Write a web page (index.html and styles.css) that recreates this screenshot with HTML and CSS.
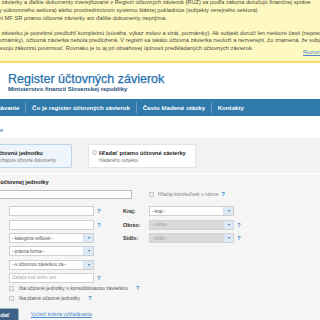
FILE: index.html
```html
<!DOCTYPE html>
<html lang="sk">
  <head>
    <meta charset="UTF-8" />
    <meta name="viewport" content="width=device-width, initial-scale=1.0" />
    <title>Register účtovných závierok</title>
    <link rel="stylesheet" href="styles.css">
  </head>
  <body>
    <div class="page">
      <div class="notice">
        <p>
          Účtovné závierky a ďalšie dokumenty zverejňované v Registri účtovných závierok (RÚZ) sa podľa zákona doručujú finančnej správe<br />
          (subjekty súkromného sektora) alebo prostredníctvom systému štátnej pokladnice (subjekty verejného sektora).<br />
          Portál ani MF SR priamo účtovné závierky ani ďalšie dokumenty neprijíma.
        </p>
        <div class="notice-last">
          <p>
            Účtovnú závierku je potrebné predložiť kompletnú (súvaha, výkaz ziskov a strát, poznámky). Ak subjekt doručí len niektoré časti (nepredloží<br />
            (napr. poznámky), účtovná závierka nebola predložená. V registri sa takáto účtovná závierka neuloží a nezverejní, čo znamená, že subjekt<br />
            nesplnil svoju zákonnú povinnosť. Rovnako je to aj pri obsahovej úplnosti predkladaných účtovných závierok.
          </p>
          <a href="#" class="dismiss">Rozumiem</a>
        </div>
      </div>

      <header class="masthead">
        <h1>Register účtovných závierok</h1>
        <p>Ministerstvo financií Slovenskej republiky</p>
      </header>

      <nav class="mainnav">
        <ul>
          <li><a href="#">Vyhľadávanie</a></li>
          <li><a href="#">Čo je register účtovných závierok</a></li>
          <li><a href="#">Často kladené otázky</a></li>
          <li><a href="#">Kontakty</a></li>
        </ul>
      </nav>

      <div class="crumbs"><a href="#">Vyhľadávanie</a></div>

      <form class="search" id="searchForm">
        <div class="modes">
          <label class="mode mode-active">
            <input type="radio" name="mode" checked />
            <span>
              <b>Hľadať účtovnú jednotku</b>
              <small>a k nej prislúchajúce účtovné dokumenty</small>
            </span>
          </label>
          <label class="mode">
            <input type="radio" name="mode" />
            <span>
              <b>Hľadať priamo účtovné závierky</b>
              <small>hľadaného subjektu</small>
            </span>
          </label>
        </div>

        <div class="fields">
          <label class="field-title" for="name">Názov účtovnej jednotky</label>
          <div class="name-row">
            <input type="text" id="name" class="wide" />
            <label class="check"><input type="checkbox" /> Hľadaj ktorékoľvek v názve</label>
            <span class="help">?</span>
          </div>

          <div class="cols">
            <div class="col-left">
              <div class="row"><input type="text" /><span class="help">?</span></div>
              <div class="row"><input type="text" /><span class="help">?</span></div>
              <div class="row">
                <div class="select"><select><option>--kategória veľkosti--</option></select><span class="arrow"></span></div>
              </div>
              <div class="row">
                <div class="select"><select><option>--právna forma--</option></select><span class="arrow"></span></div>
              </div>
              <div class="row">
                <div class="select"><select><option>--s účtovnou závierkou za--</option></select><span class="arrow"></span></div>
              </div>
              <div class="row"><input type="text" placeholder="Zadajte kód alebo text" /><span class="help">?</span></div>
            </div>
            <div class="col-right">
              <div class="row">
                <span class="lbl">Kraj:</span>
                <div class="select"><select><option>--kraj--</option></select><span class="arrow"></span></div>
              </div>
              <div class="row">
                <span class="lbl">Okres:</span>
                <div class="select disabled"><select disabled><option>--okres--</option></select><span class="arrow"></span></div>
                <span class="help">?</span>
              </div>
              <div class="row">
                <span class="lbl">Sídlo:</span>
                <div class="select disabled"><select disabled><option>--sídlo--</option></select><span class="arrow"></span></div>
                <span class="help">?</span>
              </div>
            </div>
          </div>

          <div class="checks">
            <label class="check"><input type="checkbox" /> Iba účtovné jednotky s konsolidovanou závierkou <span class="help">?</span></label>
            <label class="check"><input type="checkbox" /> Iba platné účtovné jednotky <span class="help">?</span></label>
          </div>

          <div class="actions">
            <button type="button" class="btn">Hľadať</button>
            <a href="#" class="reset">Vyčistiť kritériá vyhľadávania</a>
          </div>
        </div>
      </form>
    </div>
  </body>
</html>
```

FILE: styles.css
```css
html,
body {
  margin: 0;
  padding: 0;
  overflow: hidden;
  background-color: #f5f5f5;
}
body {
  font-family: "Liberation Sans", Arial, sans-serif;
  color: #333;
}
a {
  text-decoration: none;
}
.page {
  width: 400px;
  margin-left: -60px;
  background-color: #ffffff;
}

/* notice */
.notice {
  background-color: #fef9c1;
  border-bottom: 2px solid #f8de6c;
  padding: 0 15px 7.5px 39px;
  font-size: 5.7px;
  line-height: 7.8px;
  color: #4a4a40;
  white-space: nowrap;
}
.notice p {
  margin: -0.6px 0 0 0;
}
.notice-last {
  display: grid;
  margin-top: 6.9px;
}
.notice-last p {
  grid-area: 1 / 1;
  margin: 0;
}
.dismiss {
  grid-area: 1 / 1;
  justify-self: end;
  align-self: end;
  margin-bottom: -4px;
  color: #4a8ccc;
  text-decoration: underline;
}

/* header */
.masthead {
  padding: 9px 0 6.2px 68px;
}
.masthead h1 {
  margin: 0;
  font-size: 12.5px;
  line-height: 14px;
  font-weight: normal;
  color: #2670ae;
  -webkit-text-stroke: 0.25px #2670ae;
}
.masthead p {
  margin: 0;
  font-size: 6px;
  line-height: 7px;
  font-weight: bold;
  color: #1d4f7c;
}

/* nav */
.mainnav {
  background-color: #2f7aaa;
  height: 17px;
  padding-left: 34px;
}
.mainnav ul {
  list-style: none;
  margin: 0;
  padding: 0;
  height: 17px;
  display: flex;
  align-items: center;
  white-space: nowrap;
}
.mainnav li {
  display: flex;
  align-items: center;
  height: 11px;
  padding: 0 5.8px;
}
.mainnav li + li {
  border-left: 1px solid #6b9ec4;
}
.mainnav a {
  color: #ffffff;
  font-size: 6.15px;
  font-weight: bold;
}

.crumbs {
  padding: 11px 0 4px 27px;
  font-size: 6px;
  line-height: 7px;
}
.crumbs a {
  color: #2e7bbf;
}

/* search form */
.search {
  background-color: #f5f5f5;
}
.modes {
  display: flex;
  gap: 16px;
  padding: 6px 0 5px 24px;
  background-color: #f2f2f2;
  border-bottom: 1px solid #ffffff;
}
.mode {
  width: 108px;
  height: 24px;
  box-sizing: border-box;
  display: flex;
  gap: 2px;
  padding: 4px 0 0 3px;
  background-color: #ffffff;
  border: 1px solid #e4e4e4;
  border-radius: 2px;
  white-space: nowrap;
}
.mode-active {
  background-color: #eef5fc;
  border-color: #bcd6ec;
}
.mode input {
  appearance: none;
  width: 5px;
  height: 5px;
  margin: 1.5px 0 0 0;
  border: 1px solid #c4c4c4;
  border-radius: 50%;
  background-color: #f4f4f4;
  box-sizing: border-box;
}
.mode span {
  display: flex;
  flex-direction: column;
}
.mode b {
  font-size: 5.7px;
  line-height: 8px;
  color: #222;
}
.mode small {
  font-size: 4.5px;
  line-height: 7px;
  color: #777;
}

.fields {
  padding: 5.5px 0 0 42px;
}
.field-title {
  display: block;
  font-size: 5.7px;
  line-height: 7px;
  font-weight: bold;
  color: #222;
}
input[type="text"] {
  width: 85px;
  height: 10px;
  box-sizing: border-box;
  border: 1px solid #cfcfcf;
  background-color: #ffffff;
  padding: 0 2px;
  margin: 0;
  font-family: inherit;
  font-size: 4.5px;
  outline: none;
}
input[type="text"]::placeholder {
  color: #aaa;
}
.name-row {
  display: flex;
  align-items: center;
  margin-top: 3.5px;
}
.name-row .wide {
  width: 150px;
  height: 9px;
  border-color: #bdbdbd;
}
.check {
  display: flex;
  align-items: center;
  gap: 5px;
  white-space: nowrap;
  font-size: 5px;
  line-height: 7px;
  color: #555;
}
.name-row .check {
  margin-left: 17px;
  gap: 4px;
  color: #888;
}
.check input {
  appearance: none;
  width: 5px;
  height: 5px;
  margin: 0;
  border: 1px solid #c8c8c8;
  background-color: #f2f2f2;
  box-sizing: border-box;
}
.help {
  color: #3b86c6;
  font-size: 6px;
  font-weight: bold;
  margin-left: 3px;
}

.cols {
  display: flex;
  margin: 7.7px 0 0 27px;
}
.col-left,
.col-right {
  display: flex;
  flex-direction: column;
  gap: 3.3px;
}
.col-left {
  width: 114px;
}
.row {
  display: flex;
  align-items: center;
  height: 10px;
}
.lbl {
  width: 26px;
  font-size: 5.5px;
  font-weight: bold;
  color: #333;
}
.select {
  display: flex;
  width: 85px;
  height: 10px;
  box-sizing: border-box;
  border: 1px solid #cfcfcf;
  background-color: #ffffff;
}
.select select {
  appearance: none;
  flex: 1;
  min-width: 0;
  border: 0;
  margin: 0;
  padding: 0 2px;
  background: transparent;
  font-family: inherit;
  font-size: 4.5px;
  color: #555;
  outline: none;
}
.select .arrow {
  width: 9px;
  border-left: 1px solid #cfdff0;
  background-color: #dde9f5;
  display: flex;
  align-items: center;
  justify-content: center;
}
.select .arrow::before {
  content: "";
  border-left: 1.5px solid transparent;
  border-right: 1.5px solid transparent;
  border-top: 2px solid #3d6f9c;
}
.select.disabled {
  background-color: #dadada;
  border-color: #d2d2d2;
}
.select.disabled select {
  color: #888;
}

.checks {
  display: flex;
  flex-direction: column;
  gap: 3px;
  margin: 2.3px 0 0 27px;
}

.actions {
  display: flex;
  align-items: center;
  gap: 12px;
  margin-top: 5.5px;
}
.btn {
  height: 14px;
  padding: 0 8px;
  border: 1px solid #9fb3c6;
  border-radius: 2px;
  background-color: #3c6288;
  color: #ffffff;
  font-family: inherit;
  font-size: 5.7px;
  font-weight: bold;
}
.reset {
  color: #4a8ccc;
  text-decoration: underline;
  font-size: 4.8px;
}
```
